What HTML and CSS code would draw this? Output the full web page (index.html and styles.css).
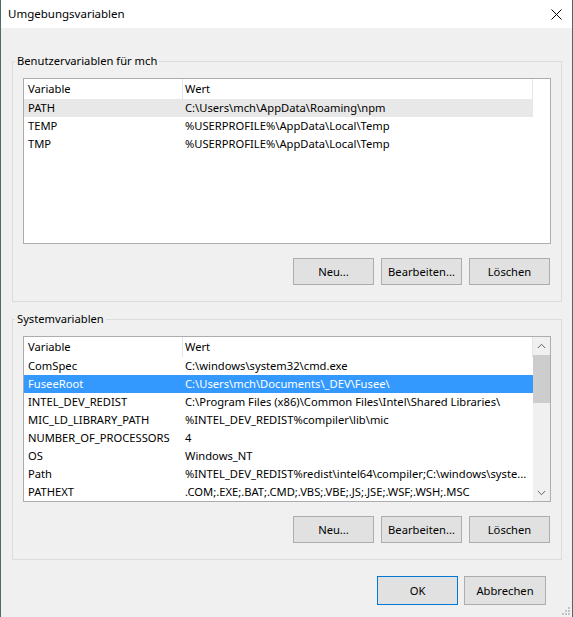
FILE: index.html
```html
<!DOCTYPE html>
<html lang="de">
<head>
<meta charset="utf-8">
<title>Umgebungsvariablen</title>
<link rel="stylesheet" href="styles.css">
</head>
<body>
<div class="window">
  <div class="titlebar">
    <span class="title">Umgebungsvariablen</span>
    <svg class="close" width="11" height="11" viewBox="0 0 11 11">
      <path d="M0.5 0.5 L10.5 10.5 M10.5 0.5 L0.5 10.5" stroke="#000" stroke-width="1" fill="none"/>
    </svg>
  </div>

  <div class="content">
    <fieldset class="group">
      <legend>Benutzervariablen für mch</legend>
      <div class="list">
        <div class="table">
          <div class="head"><div class="cell">Variable</div><div class="cell">Wert</div></div>
          <div class="row muted"><div class="cell">PATH</div><div class="cell">C:\Users\mch\AppData\Roaming\npm</div></div>
          <div class="row"><div class="cell">TEMP</div><div class="cell">%USERPROFILE%\AppData\Local\Temp</div></div>
          <div class="row"><div class="cell">TMP</div><div class="cell">%USERPROFILE%\AppData\Local\Temp</div></div>
        </div>
      </div>
      <div class="actions">
        <button class="btn">Neu...</button>
        <button class="btn">Bearbeiten...</button>
        <button class="btn">Löschen</button>
      </div>
    </fieldset>

    <fieldset class="group group-system">
      <legend>Systemvariablen</legend>
      <div class="list">
        <div class="table">
          <div class="head"><div class="cell">Variable</div><div class="cell">Wert</div></div>
          <div class="row"><div class="cell">ComSpec</div><div class="cell">C:\windows\system32\cmd.exe</div></div>
          <div class="row selected"><div class="cell">FuseeRoot</div><div class="cell">C:\Users\mch\Documents\_DEV\Fusee\</div></div>
          <div class="row"><div class="cell">INTEL_DEV_REDIST</div><div class="cell">C:\Program Files (x86)\Common Files\Intel\Shared Libraries\</div></div>
          <div class="row"><div class="cell">MIC_LD_LIBRARY_PATH</div><div class="cell">%INTEL_DEV_REDIST%compiler\lib\mic</div></div>
          <div class="row"><div class="cell">NUMBER_OF_PROCESSORS</div><div class="cell">4</div></div>
          <div class="row"><div class="cell">OS</div><div class="cell">Windows_NT</div></div>
          <div class="row"><div class="cell">Path</div><div class="cell">%INTEL_DEV_REDIST%redist\intel64\compiler;C:\windows\syste...</div></div>
          <div class="row"><div class="cell">PATHEXT</div><div class="cell">.COM;.EXE;.BAT;.CMD;.VBS;.VBE;.JS;.JSE;.WSF;.WSH;.MSC</div></div>
        </div>
        <div class="scrollbar">
          <div class="arrow">
            <svg width="9" height="6" viewBox="0 0 9 6"><path d="M0.8 5 L4.5 1.3 L8.2 5" stroke="#606060" stroke-width="1" fill="none"/></svg>
          </div>
          <div class="track"><div class="thumb"></div></div>
          <div class="arrow">
            <svg width="9" height="6" viewBox="0 0 9 6"><path d="M0.8 1 L4.5 4.7 L8.2 1" stroke="#606060" stroke-width="1" fill="none"/></svg>
          </div>
        </div>
      </div>
      <div class="actions">
        <button class="btn">Neu...</button>
        <button class="btn">Bearbeiten...</button>
        <button class="btn">Löschen</button>
      </div>
    </fieldset>
  </div>

  <div class="footer">
    <button class="btn btn-default">OK</button>
    <button class="btn btn-wide">Abbrechen</button>
  </div>

  <svg class="grip" width="10" height="10" viewBox="0 0 10 10">
    <rect x="7" y="1" width="2" height="2" fill="#c3c3c3"/>
    <rect x="4" y="4" width="2" height="2" fill="#c3c3c3"/>
    <rect x="7" y="4" width="2" height="2" fill="#c3c3c3"/>
    <rect x="1" y="7" width="2" height="2" fill="#c3c3c3"/>
    <rect x="4" y="7" width="2" height="2" fill="#c3c3c3"/>
    <rect x="7" y="7" width="2" height="2" fill="#c3c3c3"/>
  </svg>
</div>
</body>
</html>
```

FILE: styles.css
```css
* {
  box-sizing: border-box;
}

body {
  margin: 0;
  font-family: "Noto Sans", "Open Sans", sans-serif;
  font-size: 11.2px;
  color: #000;
}

.window {
  position: relative;
  width: 573px;
  height: 617px;
  background: #f0f0f0;
  border-left: 1px solid #4e6b66;
  border-right: 1px solid #4e6b66;
  display: flex;
  flex-direction: column;
}

/* title bar */
.titlebar {
  height: 28px;
  flex: none;
  background: #fff;
  display: flex;
  align-items: center;
  justify-content: space-between;
  padding: 0 10px 0 7px;
}

.title {
  font-size: 11.5px;
  line-height: 16px;
}

.close {
  display: block;
}

/* dialog body */
.content {
  padding: 0 10px 0 11px;
}

.group {
  margin: 25px 0 0;
  padding: 9px 10px 16px;
  border: 1px solid #dcdcdc;
  min-width: 0;
}

.group-system {
  margin-top: 9px;
}

.group legend {
  margin-left: -8px;
  padding: 0 2px;
  line-height: 16px;
}

/* list view */
.list {
  display: flex;
  height: 166px;
  border: 1px solid #adadad;
  background: #fff;
  overflow: hidden;
}

.table {
  width: 509px;
  flex: none;
}

.head,
.row {
  display: grid;
  grid-template-columns: 159px 350px;
}

.head {
  height: 20px;
  line-height: 20px;
}

.head .cell {
  border-right: 1px solid #e5e5e5;
}

.row {
  height: 18px;
  line-height: 18px;
}

.cell {
  white-space: nowrap;
  overflow: hidden;
  padding-left: 4px;
}

.cell + .cell {
  padding-left: 2px;
}

.row.muted {
  background: #e8e8e8;
}

.row.selected {
  background: #3399ff;
  color: #fff;
}

/* vertical scrollbar */
.scrollbar {
  width: 17px;
  flex: none;
  display: flex;
  flex-direction: column;
  background: #f0f0f0;
}

.arrow {
  height: 17px;
  flex: none;
  display: flex;
  align-items: center;
  justify-content: center;
}

.track {
  flex: 1;
  padding-top: 1px;
}

.thumb {
  height: 48px;
  background: #cdcdcd;
}

/* buttons */
.actions {
  display: flex;
  justify-content: flex-end;
  gap: 7px;
  margin: 14px 1px 0 0;
}

.btn {
  width: 81px;
  height: 27px;
  padding: 0;
  background: #e1e1e1;
  border: 1px solid #adadad;
  font: inherit;
  color: #000;
}

.footer {
  display: flex;
  justify-content: flex-end;
  gap: 6px;
  margin-top: 16px;
  padding-right: 26px;
}

.footer .btn {
  height: 29px;
}

.btn-default {
  border-color: #0078d7;
}

.btn-wide {
  width: 82px;
}

/* resize grip in the lower right corner */
.grip {
  position: absolute;
  right: 1px;
  bottom: 1px;
}
```
